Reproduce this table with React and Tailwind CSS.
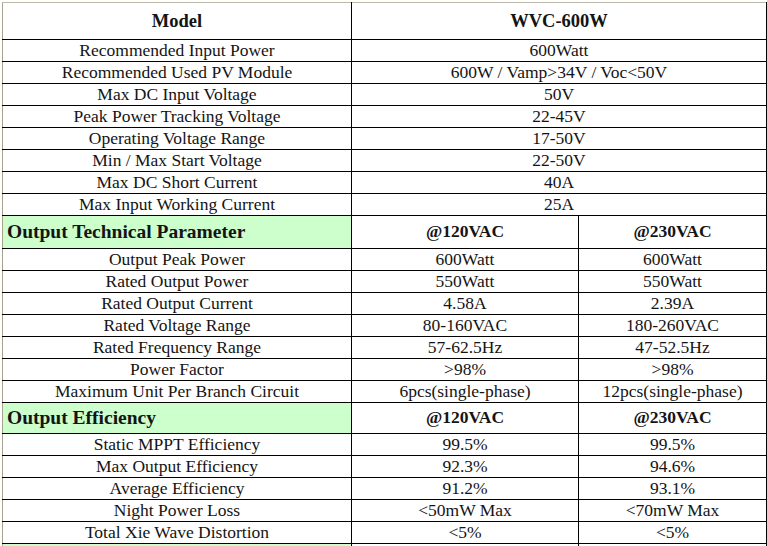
const inputRows = [
  ['Recommended Input Power', '600Watt'],
  ['Recommended Used PV Module', '600W / Vamp>34V / Voc<50V'],
  ['Max DC Input Voltage', '50V'],
  ['Peak Power Tracking Voltage', '22-45V'],
  ['Operating Voltage Range', '17-50V'],
  ['Min / Max Start Voltage', '22-50V'],
  ['Max DC Short Current', '40A'],
  ['Max Input Working Current', '25A'],
];

const outputRows = [
  ['Output Peak Power', '600Watt', '600Watt'],
  ['Rated Output Power', '550Watt', '550Watt'],
  ['Rated Output Current', '4.58A', '2.39A'],
  ['Rated Voltage Range', '80-160VAC', '180-260VAC'],
  ['Rated Frequency Range', '57-62.5Hz', '47-52.5Hz'],
  ['Power Factor', '>98%', '>98%'],
  ['Maximum Unit Per Branch Circuit', '6pcs(single-phase)', '12pcs(single-phase)'],
];

const efficiencyRows = [
  ['Static MPPT Efficiency', '99.5%', '99.5%'],
  ['Max Output Efficiency', '92.3%', '94.6%'],
  ['Average Efficiency', '91.2%', '93.1%'],
  ['Night Power Loss', '<50mW Max', '<70mW Max'],
  ['Total Xie Wave Distortion', '<5%', '<5%'],
];

const cell = 'border border-black text-center align-middle p-0 leading-none';

function SectionHead({ title, height }) {
  return (
    <tr className={height}>
      <td className={`${cell} bg-[#ccffcc] text-left pl-[4px] font-bold text-[19.5px] border-l-[#a8a48c]`}>
        {title}
      </td>
      <td className={`${cell} font-bold`}>@120VAC</td>
      <td className={`${cell} font-bold`}>@230VAC</td>
    </tr>
  );
}

function DataRow({ label, values }) {
  return (
    <tr className="h-[22px]">
      <td className={`${cell} border-l-[#a8a48c]`}>{label}</td>
      {values.length === 1 ? (
        <td colSpan={2} className={cell}>{values[0]}</td>
      ) : (
        values.map((v, i) => (
          <td key={i} className={cell}>{v}</td>
        ))
      )}
    </tr>
  );
}

export default function App() {
  return (
    <div className="w-[767px] h-[546px] overflow-hidden bg-white pt-[2px] pl-[2px]">
      <table
        className="border-collapse table-fixed text-[17.5px] text-[#141414]"
        style={{ fontFamily: '"Liberation Serif", "DejaVu Serif", serif' }}
      >
        <colgroup>
          <col className="w-[349px]" />
          <col className="w-[227px]" />
          <col className="w-[188px]" />
        </colgroup>
        <tbody>
          <tr className="h-[37px]">
            <td className={`${cell} font-bold text-[18.5px] border-t-[#bdb9a8] border-l-[#a8a48c]`}>Model</td>
            <td colSpan={2} className={`${cell} font-bold text-[18.5px] border-t-[#bdb9a8]`}>
              WVC-600W
            </td>
          </tr>
          {inputRows.map(([label, value]) => (
            <DataRow key={label} label={label} values={[value]} />
          ))}
          <SectionHead title="Output Technical Parameter" height="h-[33px]" />
          {outputRows.map(([label, a, b]) => (
            <DataRow key={label} label={label} values={[a, b]} />
          ))}
          <SectionHead title="Output Efficiency" height="h-[31px]" />
          {efficiencyRows.map(([label, a, b]) => (
            <DataRow key={label} label={label} values={[a, b]} />
          ))}
          <tr className="h-[22px]">
            <td className={`${cell} bg-[#ccffcc] border-l-[#a8a48c]`}>&nbsp;</td>
            <td className={cell}>&nbsp;</td>
            <td className={cell}>&nbsp;</td>
          </tr>
        </tbody>
      </table>
    </div>
  );
}
